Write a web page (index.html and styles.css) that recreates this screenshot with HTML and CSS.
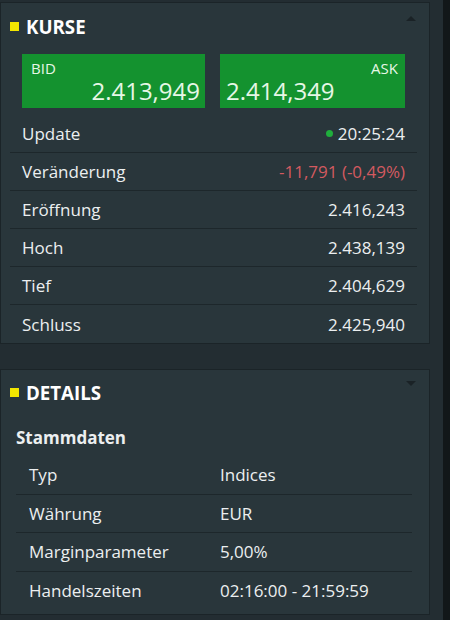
FILE: index.html
```html
<!DOCTYPE html>
<html lang="de">
<head>
<meta charset="utf-8">
<link rel="stylesheet" href="styles.css">
</head>
<body>
<div class="page">
  <div class="main">
    <section class="panel kurse">
      <div class="panel-head">
        <span class="marker"></span><h2>KURSE</h2>
        <span class="tri tri-up"></span>
      </div>
      <div class="quotes">
        <div class="quote bid"><span class="q-label">BID</span><span class="q-value">2.413,949</span></div>
        <div class="quote ask"><span class="q-label">ASK</span><span class="q-value">2.414,349</span></div>
      </div>
      <div class="rows">
        <div class="row"><span>Update</span><span class="val"><span class="dot"></span>20:25:24</span></div>
        <div class="row"><span>Veränderung</span><span class="val neg">-11,791 (-0,49%)</span></div>
        <div class="row"><span>Eröffnung</span><span class="val">2.416,243</span></div>
        <div class="row"><span>Hoch</span><span class="val">2.438,139</span></div>
        <div class="row"><span>Tief</span><span class="val">2.404,629</span></div>
        <div class="row"><span>Schluss</span><span class="val">2.425,940</span></div>
      </div>
    </section>
    <section class="panel details">
      <div class="panel-head">
        <span class="marker"></span><h2>DETAILS</h2>
        <span class="tri tri-down"></span>
      </div>
      <h3>Stammdaten</h3>
      <div class="table">
        <div class="trow"><span>Typ</span><span>Indices</span></div>
        <div class="trow"><span>Währung</span><span>EUR</span></div>
        <div class="trow"><span>Marginparameter</span><span>5,00%</span></div>
        <div class="trow"><span>Handelszeiten</span><span>02:16:00 - 21:59:59</span></div>
      </div>
    </section>
  </div>
  <div class="scrollbar"></div>
</div>
</body>
</html>
```

FILE: styles.css
```css
html, body {
  margin: 0;
  padding: 0;
  height: 100%;
}
body {
  background: #232d32;
  font-family: "Open Sans", "Noto Sans", sans-serif;
  color: #eceff0;
}
.page {
  display: flex;
  height: 620px;
  overflow: hidden;
}
.main {
  flex: 1;
  padding-top: 2px;
  padding-right: 12px;
  display: flex;
  flex-direction: column;
  gap: 25px;
}
.scrollbar {
  width: 7px;
  background: #121719;
}
.panel {
  background: #29363b;
  border: 1px solid #1b2428;
  box-sizing: border-box;
  width: 430px;
}
.panel-head {
  position: relative;
  height: 46px;
  display: flex;
  align-items: center;
  padding-left: 9px;
}
.marker {
  width: 9px;
  height: 9px;
  background: #f2e600;
  margin-right: 7px;
  margin-top: 1px;
}
.panel-head h2 {
  margin: 0;
  font-size: 18.7px;
  font-weight: 700;
  color: #ffffff;
}
.tri {
  position: absolute;
  right: 13px;
  width: 0;
  height: 0;
  border-left: 5px solid transparent;
  border-right: 5px solid transparent;
}
.tri-up {
  top: 13px;
  border-bottom: 5px solid #1a2226;
}
.tri-down {
  top: 11px;
  border-top: 5px solid #1a2226;
}
.quotes {
  display: grid;
  grid-template-columns: 183px 185px;
  column-gap: 15px;
  padding: 5px 0 0 21px;
}
.quote {
  background: #14922f;
  height: 54px;
  box-sizing: border-box;
  padding: 5px 5px 0 9px;
  display: flex;
  flex-direction: column;
  color: #e6f7e6;
}
.q-label {
  font-size: 15px;
  line-height: 18px;
}
.q-value {
  font-size: 24px;
  line-height: 28px;
}
.bid .q-value { text-align: right; }
.ask .q-label { text-align: right; }
.ask { padding-left: 6px; padding-right: 7px; }
.rows {
  margin: 7px 12px 0 9px;
}
.row {
  display: flex;
  justify-content: space-between;
  align-items: center;
  height: 37px;
  padding: 0 12px;
  border-bottom: 1px solid #1d272b;
  font-size: 17px;
}
.row:last-child { border-bottom: none; height: 38px; }
.val { display: flex; align-items: center; }
.dot {
  width: 7px;
  height: 7px;
  border-radius: 50%;
  background: #1fae3c;
  margin-right: 5px;
}
.neg { color: #d35a60; }
.details .panel-head { height: 44px; }
.details h3 {
  margin: 0 0 0 15px;
  font-size: 17px;
  font-weight: 700;
  line-height: 48px;
  height: 40px;
}
.table {
  margin: 0 17px 5px 15px;
  padding-top: 2px;
}
.trow {
  display: grid;
  grid-template-columns: 191px 1fr;
  height: 37.5px;
  align-items: center;
  padding-left: 13px;
  border-bottom: 1px solid #1d272b;
  font-size: 17px;
}
.trow:last-child { border-bottom: none; }
```
